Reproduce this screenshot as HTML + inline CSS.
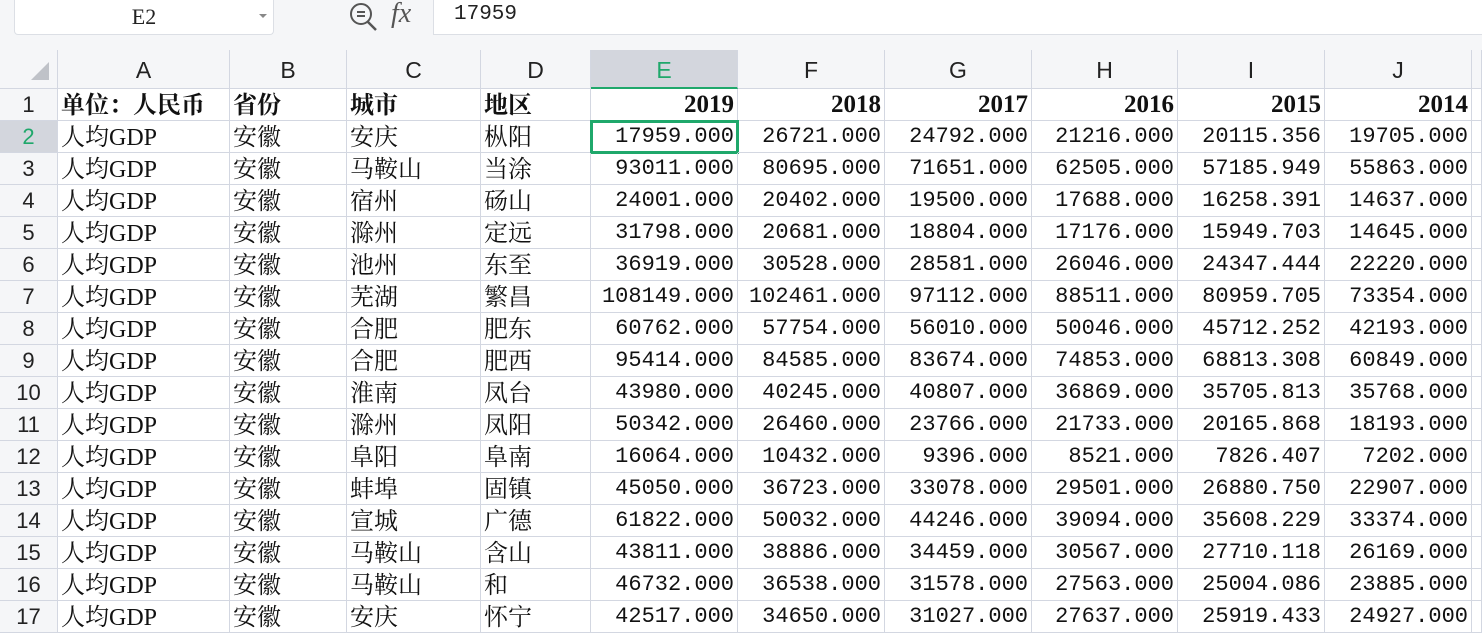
<!DOCTYPE html>
<html><head><meta charset="utf-8"><style>
*{margin:0;padding:0;box-sizing:border-box}
body{width:1482px;height:633px;overflow:hidden;background:#f5f6f8;position:relative;font-family:"Liberation Sans","Noto Sans CJK SC",sans-serif}
#nb{position:absolute;left:14px;top:0;width:260px;height:35px;background:#fff;border:1px solid #dcdfe5;border-top:none;border-radius:0 0 4px 4px;font-family:"Liberation Serif",serif;font-size:22px;text-align:center;line-height:33px;color:#222}
#nb:after{content:"";position:absolute;right:6px;top:14px;border:4px solid transparent;border-top:4px solid #888}
#fx{position:absolute;left:433px;top:0;width:1060px;height:35px;background:#fff;border:1px solid #dcdfe5;border-top:none;font-family:"Liberation Mono",monospace;font-size:21px;line-height:30px;padding-left:20px;color:#222}
#g{position:absolute;left:0;top:50px;display:grid;grid-template-columns:58px 172px 117px 134px 110px 147px 147px 147px 146px 147px 147px 10px;grid-template-rows:39px repeat(17,32px);background:#fff}
#g>div{border-right:1px solid #d3d7e1;border-bottom:1px solid #d3d7e1;overflow:hidden;white-space:nowrap;height:100%;line-height:31px;padding:0 3px;text-align:right;font-family:"Liberation Mono",monospace;font-size:22px;color:#111}
#g>div.h{background:#f5f6f8;text-align:center;font-family:"Liberation Sans",sans-serif;font-size:23px;color:#222;line-height:40px}
#g>div.r{background:#f5f6f8;text-align:center;font-family:"Liberation Sans",sans-serif;font-size:22px;color:#222;padding:0}
#g>div.c{text-align:left;font-family:"Noto Serif CJK SC",serif;font-size:24px;line-height:28px}
#g>div.c span{font-family:"Liberation Serif",serif;font-size:24px}
#g>div.b{font-weight:bold;font-family:"Liberation Serif",serif;font-size:25px}
#g>div.cb{font-weight:bold}
#g>div.sel{outline:3px solid #1fa86b;outline-offset:-2px}
</style></head><body>
<div id="nb">E2</div>
<svg style="position:absolute;left:348px;top:2px" width="32" height="30" viewBox="0 0 32 30"><circle cx="13" cy="12" r="10" fill="none" stroke="#555" stroke-width="2"/><line x1="20" y1="20" x2="28" y2="28" stroke="#555" stroke-width="2.5"/><line x1="9" y1="10" x2="17" y2="10" stroke="#555" stroke-width="2"/><line x1="9" y1="14" x2="17" y2="14" stroke="#555" stroke-width="2"/></svg>
<div style="position:absolute;left:391px;top:-2px;font-family:'Liberation Serif',serif;font-style:italic;font-size:28px;color:#555">fx</div>
<div id="fx">17959</div>
<div id="g">
<div class="h" style="position:relative"><div style="position:absolute;right:8px;bottom:8px;border-left:18px solid transparent;border-bottom:18px solid #bfc2c8"></div></div><div class="h">A</div><div class="h">B</div><div class="h">C</div><div class="h">D</div><div class="h" style="background:#d3d6dd;color:#1fa86b;border-bottom:2px solid #1fa86b">E</div><div class="h">F</div><div class="h">G</div><div class="h">H</div><div class="h">I</div><div class="h">J</div><div class="h"></div>
<div class="r">1</div><div class="c cb">单位：人民币</div><div class="c cb">省份</div><div class="c cb">城市</div><div class="c cb">地区</div><div class="b">2019</div><div class="b">2018</div><div class="b">2017</div><div class="b">2016</div><div class="b">2015</div><div class="b">2014</div><div></div>
<div class="r" style="background:#d3d6dd;color:#1fa86b">2</div><div class="c">人均<span>GDP</span></div><div class="c">安徽</div><div class="c">安庆</div><div class="c">枞阳</div><div class="sel">17959.000</div><div>26721.000</div><div>24792.000</div><div>21216.000</div><div>20115.356</div><div>19705.000</div><div></div>
<div class="r">3</div><div class="c">人均<span>GDP</span></div><div class="c">安徽</div><div class="c">马鞍山</div><div class="c">当涂</div><div>93011.000</div><div>80695.000</div><div>71651.000</div><div>62505.000</div><div>57185.949</div><div>55863.000</div><div></div>
<div class="r">4</div><div class="c">人均<span>GDP</span></div><div class="c">安徽</div><div class="c">宿州</div><div class="c">砀山</div><div>24001.000</div><div>20402.000</div><div>19500.000</div><div>17688.000</div><div>16258.391</div><div>14637.000</div><div></div>
<div class="r">5</div><div class="c">人均<span>GDP</span></div><div class="c">安徽</div><div class="c">滁州</div><div class="c">定远</div><div>31798.000</div><div>20681.000</div><div>18804.000</div><div>17176.000</div><div>15949.703</div><div>14645.000</div><div></div>
<div class="r">6</div><div class="c">人均<span>GDP</span></div><div class="c">安徽</div><div class="c">池州</div><div class="c">东至</div><div>36919.000</div><div>30528.000</div><div>28581.000</div><div>26046.000</div><div>24347.444</div><div>22220.000</div><div></div>
<div class="r">7</div><div class="c">人均<span>GDP</span></div><div class="c">安徽</div><div class="c">芜湖</div><div class="c">繁昌</div><div>108149.000</div><div>102461.000</div><div>97112.000</div><div>88511.000</div><div>80959.705</div><div>73354.000</div><div></div>
<div class="r">8</div><div class="c">人均<span>GDP</span></div><div class="c">安徽</div><div class="c">合肥</div><div class="c">肥东</div><div>60762.000</div><div>57754.000</div><div>56010.000</div><div>50046.000</div><div>45712.252</div><div>42193.000</div><div></div>
<div class="r">9</div><div class="c">人均<span>GDP</span></div><div class="c">安徽</div><div class="c">合肥</div><div class="c">肥西</div><div>95414.000</div><div>84585.000</div><div>83674.000</div><div>74853.000</div><div>68813.308</div><div>60849.000</div><div></div>
<div class="r">10</div><div class="c">人均<span>GDP</span></div><div class="c">安徽</div><div class="c">淮南</div><div class="c">凤台</div><div>43980.000</div><div>40245.000</div><div>40807.000</div><div>36869.000</div><div>35705.813</div><div>35768.000</div><div></div>
<div class="r">11</div><div class="c">人均<span>GDP</span></div><div class="c">安徽</div><div class="c">滁州</div><div class="c">凤阳</div><div>50342.000</div><div>26460.000</div><div>23766.000</div><div>21733.000</div><div>20165.868</div><div>18193.000</div><div></div>
<div class="r">12</div><div class="c">人均<span>GDP</span></div><div class="c">安徽</div><div class="c">阜阳</div><div class="c">阜南</div><div>16064.000</div><div>10432.000</div><div>9396.000</div><div>8521.000</div><div>7826.407</div><div>7202.000</div><div></div>
<div class="r">13</div><div class="c">人均<span>GDP</span></div><div class="c">安徽</div><div class="c">蚌埠</div><div class="c">固镇</div><div>45050.000</div><div>36723.000</div><div>33078.000</div><div>29501.000</div><div>26880.750</div><div>22907.000</div><div></div>
<div class="r">14</div><div class="c">人均<span>GDP</span></div><div class="c">安徽</div><div class="c">宣城</div><div class="c">广德</div><div>61822.000</div><div>50032.000</div><div>44246.000</div><div>39094.000</div><div>35608.229</div><div>33374.000</div><div></div>
<div class="r">15</div><div class="c">人均<span>GDP</span></div><div class="c">安徽</div><div class="c">马鞍山</div><div class="c">含山</div><div>43811.000</div><div>38886.000</div><div>34459.000</div><div>30567.000</div><div>27710.118</div><div>26169.000</div><div></div>
<div class="r">16</div><div class="c">人均<span>GDP</span></div><div class="c">安徽</div><div class="c">马鞍山</div><div class="c">和</div><div>46732.000</div><div>36538.000</div><div>31578.000</div><div>27563.000</div><div>25004.086</div><div>23885.000</div><div></div>
<div class="r">17</div><div class="c">人均<span>GDP</span></div><div class="c">安徽</div><div class="c">安庆</div><div class="c">怀宁</div><div>42517.000</div><div>34650.000</div><div>31027.000</div><div>27637.000</div><div>25919.433</div><div>24927.000</div><div></div>
</div>
</body></html>
